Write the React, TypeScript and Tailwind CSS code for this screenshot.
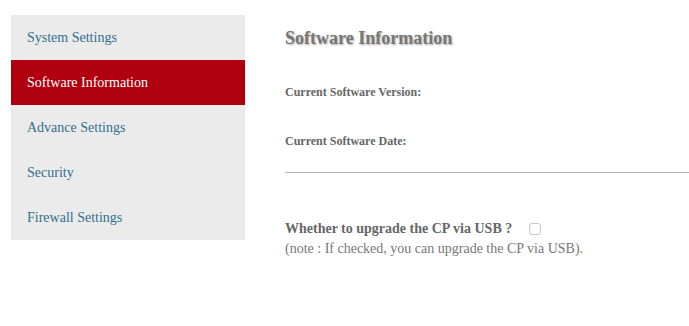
const menu = [
  "System Settings",
  "Software Information",
  "Advance Settings",
  "Security",
  "Firewall Settings",
];

export default function App() {
  const active = "Software Information";

  return (
    <div className="flex items-start bg-white font-['Liberation_Serif',serif] min-h-[326px]">
      <nav className="ml-[11px] mt-[15px] w-[234px] shrink-0 bg-[#ebebeb]">
        {menu.map((item) => (
          <div
            key={item}
            className={
              item === active
                ? "flex h-[45px] items-center bg-[#b0000e] pl-4 text-[14px] text-white"
                : "flex h-[45px] items-center pl-4 text-[14px] text-[#31708f]"
            }
          >
            {item}
          </div>
        ))}
      </nav>

      <main className="ml-10 flex-1 pt-[26px]">
        <h2 className="text-[18px] leading-6 font-bold text-[#777] [text-shadow:1px_1px_2px_#aaa]">
          Software Information
        </h2>

        <p className="mt-[35px] text-[12px] leading-[14px] font-bold text-[#666]">
          Current Software Version:
        </p>
        <p className="mt-[35px] text-[12px] leading-[14px] font-bold text-[#666]">
          Current Software Date:
        </p>

        <hr className="mt-6 border-t border-[#b5b5b5]" />

        <div className="mt-[46px] flex items-center text-[14px] leading-5 font-bold text-[#666]">
          <span>Whether to upgrade the CP via USB ?</span>
          <input
            type="checkbox"
            className="ml-[17px] h-3 w-3 appearance-none rounded-[3px] border border-[#c8c8c8] bg-white"
          />
        </div>
        <p className="text-[14px] leading-5 text-[#777]">
          (note : If checked, you can upgrade the CP via USB).
        </p>
      </main>
    </div>
  );
}
